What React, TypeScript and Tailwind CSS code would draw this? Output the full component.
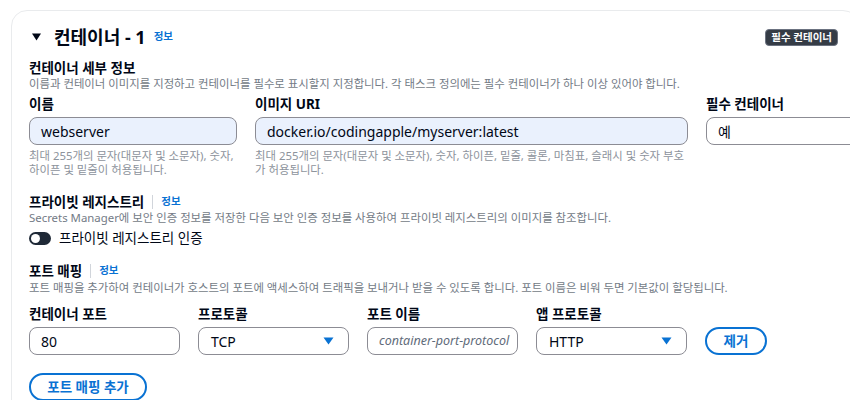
import React from 'react';

const font = { fontFamily: '"Noto Sans", "Noto Sans CJK KR", sans-serif' };

function Caret() {
  return (
    <svg width="11" height="8" viewBox="0 0 11 8" className="shrink-0">
      <path d="M0.5 0.5 H10.5 L5.5 7.5 Z" fill="#0972d3" />
    </svg>
  );
}

function Label({ children }: { children: React.ReactNode }) {
  return <p className="text-[13.5px] leading-[18px] font-bold text-[#000716] mb-[4px]">{children}</p>;
}

function TextInput({ value, filled, placeholder }: { value?: string; filled?: boolean; placeholder?: string }) {
  return (
    <div
      className={`h-[28px] rounded-[8px] border border-[#8c8c94] pl-[11px] pr-[4px] flex items-center ${
        filled ? 'bg-[#eaf1fd]' : 'bg-white'
      }`}
    >
      {value ? (
        <span className="text-[14px] text-[#000716] whitespace-nowrap">{value}</span>
      ) : (
        <span className="text-[12.5px] text-[#5f6b7a] italic whitespace-nowrap">{placeholder}</span>
      )}
    </div>
  );
}

function Select({ value }: { value: string }) {
  return (
    <div className="h-[28px] rounded-[8px] border border-[#8c8c94] bg-white pl-[12px] pr-[14px] flex items-center justify-between text-[14px]">
      <span className="text-[#000716]">{value}</span>
      <Caret />
    </div>
  );
}

function SectionHeader({ title }: { title: string }) {
  return (
    <div className="flex items-center h-[18px]">
      <span className="text-[13.5px] font-bold text-[#000716]">{title}</span>
      <span className="mx-[8px] w-px h-[14px] bg-[#d1d5db]" />
      <span className="text-[10.5px] font-bold text-[#0972d3]">정보</span>
    </div>
  );
}

export default function App() {
  return (
    <div className="w-[850px] h-[400px] overflow-hidden bg-white" style={font}>
      <div className="ml-[11px] mt-[10px] w-[848px] h-[420px] border border-[#e9ebed] rounded-[16px] pl-[17px] pt-[14px]">
        {/* Header */}
        <div className="flex items-center justify-between pr-[20px] h-[24px]">
          <div className="flex items-center">
            <svg width="10" height="8" viewBox="0 0 10 8" className="ml-[3px] mr-[12px]">
              <path d="M0 0.5 H9 L4.5 7.5 Z" fill="#000716" />
            </svg>
            <span className="text-[18px] font-bold text-[#000716] leading-[24px]">컨테이너 - 1</span>
            <span className="ml-[8px] text-[10.5px] font-bold text-[#0972d3]">정보</span>
          </div>
          <span className="px-[5px] h-[17px] flex items-center rounded-[4px] bg-[#353c46] border border-[#6b7280] text-white text-[10.5px] font-bold leading-none">
            필수 컨테이너
          </span>
        </div>

        {/* Container details */}
        <div className="mt-[10px]">
          <p className="text-[13.5px] leading-[18px] font-bold text-[#000716]">컨테이너 세부 정보</p>
          <p className="text-[11.4px] leading-[14px] text-[#737b86] whitespace-nowrap">
            이름과 컨테이너 이미지를 지정하고 컨테이너를 필수로 표시할지 지정합니다. 각 태스크 정의에는 필수 컨테이너가 하나 이상 있어야 합니다.
          </p>
        </div>

        <div className="mt-[4px] grid grid-cols-[208px_433px_160px] gap-x-[18px]">
          <div>
            <Label>이름</Label>
            <TextInput value="webserver" filled />
            <p className="mt-[4px] text-[11.4px] leading-[13.5px] text-[#8d939c] break-all">
              최대 255개의 문자(대문자 및 소문자), 숫자, 하이픈 및 밑줄이 허용됩니다.
            </p>
          </div>
          <div>
            <Label>이미지 URI</Label>
            <TextInput value="docker.io/codingapple/myserver:latest" filled />
            <p className="mt-[4px] text-[11.4px] leading-[13.5px] text-[#8d939c] break-all">
              최대 255개의 문자(대문자 및 소문자), 숫자, 하이픈, 밑줄, 콜론, 마침표, 슬래시 및 숫자 부호가 허용됩니다.
            </p>
          </div>
          <div>
            <Label>필수 컨테이너</Label>
            <TextInput value="예" />
          </div>
        </div>

        {/* Private registry */}
        <div className="mt-[17px]">
          <SectionHeader title="프라이빗 레지스트리" />
          <p className="text-[11.4px] leading-[14px] text-[#737b86] whitespace-nowrap">
            Secrets Manager에 보안 인증 정보를 저장한 다음 보안 인증 정보를 사용하여 프라이빗 레지스트리의 이미지를 참조합니다.
          </p>
          <div className="mt-[3px] flex items-center h-[20px]">
            <span className="w-[22px] h-[13px] rounded-full bg-[#1f2937] flex items-center pl-[2px]">
              <span className="w-[9px] h-[9px] rounded-full bg-white" />
            </span>
            <span className="ml-[8px] text-[13.5px] text-[#000716]">프라이빗 레지스트리 인증</span>
          </div>
        </div>

        {/* Port mapping */}
        <div className="mt-[14px]">
          <SectionHeader title="포트 매핑" />
          <p className="text-[11.4px] leading-[14px] text-[#737b86] whitespace-nowrap mt-[1px]">
            포트 매핑을 추가하여 컨테이너가 호스트의 포트에 액세스하여 트래픽을 보내거나 받을 수 있도록 합니다. 포트 이름은 비워 두면 기본값이 할당됩니다.
          </p>
        </div>

        <div className="mt-[10px] flex items-end gap-x-[18px]">
          <div className="w-[151px]">
            <Label>컨테이너 포트</Label>
            <TextInput value="80" />
          </div>
          <div className="w-[151px]">
            <Label>프로토콜</Label>
            <Select value="TCP" />
          </div>
          <div className="w-[151px]">
            <Label>포트 이름</Label>
            <TextInput placeholder="container-port-protocol" />
          </div>
          <div className="w-[151px]">
            <Label>앱 프로토콜</Label>
            <Select value="HTTP" />
          </div>
          <button className="h-[28px] w-[62px] rounded-full border-2 border-[#0972d3] text-[#0972d3] text-[13.5px] font-bold">
            제거
          </button>
        </div>

        <button className="mt-[18px] h-[28px] w-[118px] rounded-full border-2 border-[#0972d3] text-[#0972d3] text-[13.5px] font-bold">
          포트 매핑 추가
        </button>
      </div>
    </div>
  );
}
